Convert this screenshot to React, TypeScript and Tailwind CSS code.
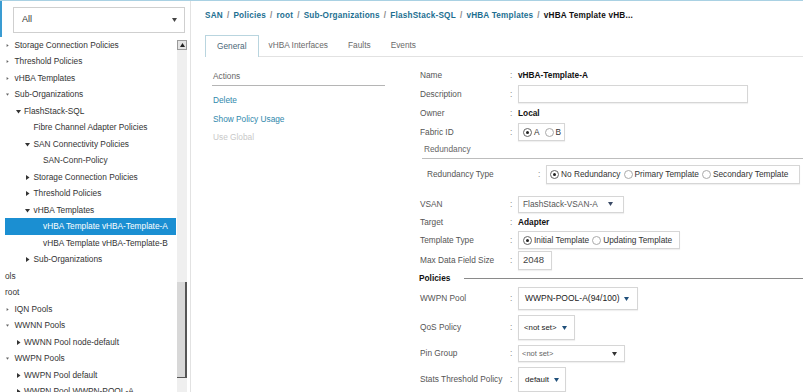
import React from "react";

type TreeItem = {
  label: string;
  level: number;
  icon: "right" | "down" | "none";
  selected?: boolean;
  flat?: boolean;
};

const tree: TreeItem[] = [
  { label: "Storage Connection Policies", level: 0, icon: "right" },
  { label: "Threshold Policies", level: 0, icon: "right" },
  { label: "vHBA Templates", level: 0, icon: "right" },
  { label: "Sub-Organizations", level: 0, icon: "down" },
  { label: "FlashStack-SQL", level: 1, icon: "down" },
  { label: "Fibre Channel Adapter Policies", level: 2, icon: "none" },
  { label: "SAN Connectivity Policies", level: 2, icon: "down" },
  { label: "SAN-Conn-Policy", level: 3, icon: "none" },
  { label: "Storage Connection Policies", level: 2, icon: "right" },
  { label: "Threshold Policies", level: 2, icon: "right" },
  { label: "vHBA Templates", level: 2, icon: "down" },
  { label: "vHBA Template vHBA-Template-A", level: 3, icon: "none", selected: true },
  { label: "vHBA Template vHBA-Template-B", level: 3, icon: "none" },
  { label: "Sub-Organizations", level: 2, icon: "right" },
  { label: "ols", level: 0, icon: "none", flat: true },
  { label: "root", level: 0, icon: "none", flat: true },
  { label: "IQN Pools", level: 0, icon: "right" },
  { label: "WWNN Pools", level: 0, icon: "down" },
  { label: "WWNN Pool node-default", level: 1, icon: "right" },
  { label: "WWPN Pools", level: 0, icon: "down" },
  { label: "WWPN Pool default", level: 1, icon: "right" },
  { label: "WWPN Pool WWPN-POOL-A", level: 1, icon: "right" },
];

const indent: Record<number, string> = {
  0: "pl-[0px]",
  1: "pl-[9.5px]",
  2: "pl-[19px]",
  3: "pl-[28.5px]",
};

function Tri({ dir, small }: { dir: "right" | "down"; small?: boolean }) {
  const s = small ? 3 : 5;
  return (
    <svg width={s} height={s} viewBox="0 0 10 10" className="block">
      {dir === "right" ? (
        <polygon points="2,0 9,5 2,10" fill={small ? "#666" : "#333"} />
      ) : (
        <polygon points="0,2 10,2 5,9" fill={small ? "#666" : "#333"} />
      )}
    </svg>
  );
}

function Caret({ color = "#333" }: { color?: string }) {
  return (
    <svg width="5" height="4" viewBox="0 0 10 8" className="block">
      <polygon points="0,0 10,0 5,8" fill={color} />
    </svg>
  );
}

function Radio({ on }: { on?: boolean }) {
  return (
    <span
      className={
        "inline-flex w-[9px] h-[9px] rounded-full border items-center justify-center bg-white " +
        (on ? "border-[#666]" : "border-[#aaa]")
      }
    >
      {on && <span className="w-[3px] h-[3px] rounded-full bg-[#222]" />}
    </span>
  );
}

function Row({
  label,
  h,
  mt,
  children,
}: {
  label: string;
  h: string;
  mt?: string;
  children?: React.ReactNode;
}) {
  return (
    <div className={"flex items-center " + h + " " + (mt || "")}>
      <div className="w-[90px] text-[#555]">{label}</div>
      <div className="w-[8px] text-[#888]">:</div>
      <div className="flex items-center">{children}</div>
    </div>
  );
}

const box = "border border-[#d6d6d6] bg-white shadow-[0_1px_1px_rgba(0,0,0,0.06)]";

export default function App() {
  return (
    <div className="w-[803px] h-[392px] overflow-hidden bg-white border-t border-[#a9d1e3] flex font-['Liberation_Sans',Arial,sans-serif] text-[8.3px] text-[#333]">
      {/* left tree panel */}
      <div className="w-[191px] border-r border-[#e2e2e2] flex flex-col overflow-hidden">
        <div className="h-[35.75px] shrink-0 border-l-2 border-[#3a9cd2] pt-[6px] pl-[11px]">
          <div className="w-[172px] h-[26px] border border-[#cfcfcf] flex items-center justify-between pl-[8px] pr-[7px] text-[9px] text-[#333]">
            <span>All</span>
            <Caret color="#444" />
          </div>
        </div>
        <div className="flex shrink-0 pl-[5px]">
          <div className="w-[171px] flex flex-col">
            {tree.map((t, i) => (
              <div
                key={i}
                className={
                  "h-[16.5px] flex items-center shrink-0 whitespace-nowrap " +
                  indent[t.level] +
                  (t.selected ? " bg-[#1b8fd2] text-white" : " text-[#333]")
                }
              >
                {!t.flat && (
                  <span className="w-[9.5px] flex items-center pl-[1px]">
                    {t.icon !== "none" && <Tri dir={t.icon} small={t.level === 0} />}
                  </span>
                )}
                <span>{t.label}</span>
              </div>
            ))}
          </div>
          <div className="ml-[1px] mt-[3px] w-[10px] flex flex-col">
            <div className="h-[10px] border border-[#9a9a9a] bg-[#e4e4e4] flex items-center justify-center">
              <svg width="5" height="4" viewBox="0 0 10 8" className="block">
                <polygon points="0,8 10,8 5,0" fill="#222" />
              </svg>
            </div>
            <div className="flex-1 bg-[#efefef] flex flex-col">
              <div className="h-[232px]" />
              <div className="h-[96px] bg-[#d8d8d8] border-r-2 border-b border-[#555]" />
            </div>
          </div>
        </div>
      </div>

      {/* right content */}
      <div className="flex-1 flex flex-col">
        <div className="h-[30px] flex items-center pl-[14px] font-bold text-[8.2px] tracking-[0.2px] whitespace-nowrap">
          {["SAN", "Policies", "root", "Sub-Organizations", "FlashStack-SQL", "vHBA Templates"].map((c) => (
            <span key={c} className="flex">
              <span className="text-[#1d6f91]">{c}</span>
              <span className="text-[#888] px-[4px]">/</span>
            </span>
          ))}
          <span className="text-[#111]">vHBA Template vHB...</span>
        </div>

        <div className="mt-[4px] ml-[14px] h-[22px] border-b border-[#e2e2e2] flex items-end text-[8.3px]">
          <div className="h-[22px] -mb-px px-[11px] flex items-center border border-b-0 border-[#b9d5df] bg-white text-[#4a6878]">
            General
          </div>
          <div className="h-[21px] flex items-center pl-[10px] pr-[10px] text-[#6a6a6a]">vHBA Interfaces</div>
          <div className="h-[21px] flex items-center px-[10px] text-[#6a6a6a]">Faults</div>
          <div className="h-[21px] flex items-center px-[10px] text-[#6a6a6a]">Events</div>
        </div>

        <div className="flex">
          {/* actions */}
          <div className="ml-[21px] w-[173px] flex flex-col">
            <div className="mt-[11px] h-[18px] flex items-center pl-[1px] border-b border-[#b5b5b5] text-[#666]">
              Actions
            </div>
            <div className="mt-[5px] h-[18.5px] flex items-center pl-[1px] text-[#2f88ac]">Delete</div>
            <div className="h-[18.5px] flex items-center pl-[1px] text-[#2f88ac]">Show Policy Usage</div>
            <div className="h-[18.5px] flex items-center pl-[1px] text-[#c8c8c8]">Use Global</div>
          </div>

          {/* form */}
          <div className="ml-[35px] flex-1 flex flex-col">
            <Row label="Name" h="h-[19px]" mt="mt-[8.5px]">
              <span className="font-bold text-[#111]">vHBA-Template-A</span>
            </Row>
            <Row label="Description" h="h-[19px]">
              <div className={"w-[230px] h-[18px] " + box} />
            </Row>
            <Row label="Owner" h="h-[19px]">
              <span className="font-bold text-[#111]">Local</span>
            </Row>
            <Row label="Fabric ID" h="h-[19px]">
              <div className={"w-[47px] h-[18px] flex items-center gap-[2px] pl-[4px] " + box}>
                <Radio on />
                <span>A</span>
                <span className="ml-[1px]" />
                <Radio />
                <span>B</span>
              </div>
            </Row>

            <div className="ml-[2px] h-[17px] pl-[2px] flex items-center border-b border-[#bdbdbd] text-[#666]">
              Redundancy
            </div>
            <div className="mt-[6px] h-[19px] pl-[7px] flex items-center">
              <div className="w-[111px] text-[#555]">Redundancy Type</div>
              <div className="w-[8px] text-[#888]">:</div>
              <div className={"w-[254px] h-[19px] flex items-center gap-[2px] pl-[3px] " + box}>
                <Radio on />
                <span className="mr-[1px]">No Redundancy</span>
                <Radio />
                <span className="mr-[1px]">Primary Template</span>
                <Radio />
                <span>Secondary Template</span>
              </div>
            </div>

            <Row label="VSAN" h="h-[18px]" mt="mt-[11.5px]">
              <div className={"w-[106px] h-[17px] flex items-center justify-between pl-[4px] pr-[10px] text-[#555] " + box}>
                <span>FlashStack-VSAN-A</span>
                <Caret color="#3a4a66" />
              </div>
            </Row>
            <Row label="Target" h="h-[18px]">
              <span className="font-bold text-[#111]">Adapter</span>
            </Row>
            <Row label="Template Type" h="h-[18px]">
              <div className={"w-[162px] h-[18px] flex items-center gap-[2px] pl-[4px] " + box}>
                <Radio on />
                <span className="mr-[1px]">Initial Template</span>
                <Radio />
                <span>Updating Template</span>
              </div>
            </Row>
            <Row label="Max Data Field Size" h="h-[19px]" mt="mt-[2px]">
              <div className={"w-[34px] h-[19px] flex items-center pl-[4px] text-[9.5px] text-[#444] " + box}>2048</div>
            </Row>

            <div className="h-[16px] flex items-center">
              <span className="font-bold text-[#111] -ml-[1px]">Policies</span>
              <div className="ml-[14px] flex-1 h-px bg-[#8a8a8a] mt-[1px]" />
            </div>

            <Row label="WWPN Pool" h="h-[23px]" mt="mt-[1px]">
              <div className={"w-[120px] h-[23px] flex items-center pl-[6px] gap-[5px] text-[8.5px] text-[#222] " + box}>
                <span>WWPN-POOL-A(94/100)</span>
                <Caret color="#1f4f7a" />
              </div>
            </Row>
            <Row label="QoS Policy" h="h-[25px]" mt="mt-[5px]">
              <div className={"w-[57px] h-[25px] flex items-center pl-[5px] gap-[5px] text-[7.8px] text-[#222] " + box}>
                <span>&lt;not set&gt;</span>
                <Caret color="#1f4f7a" />
              </div>
            </Row>
            <Row label="Pin Group" h="h-[17px]" mt="mt-[5px]">
              <div className={"w-[107px] h-[17px] flex items-center justify-between pl-[3px] pr-[7px] text-[7.5px] text-[#666] " + box}>
                <span>&lt;not set&gt;</span>
                <Caret color="#333" />
              </div>
            </Row>
            <Row label="Stats Threshold Policy" h="h-[25px]" mt="mt-[5px]">
              <div className={"w-[48px] h-[25px] flex items-center pl-[6px] gap-[5px] text-[8px] text-[#222] " + box}>
                <span>default</span>
                <Caret color="#1f4f7a" />
              </div>
            </Row>
          </div>
        </div>
      </div>
    </div>
  );
}
